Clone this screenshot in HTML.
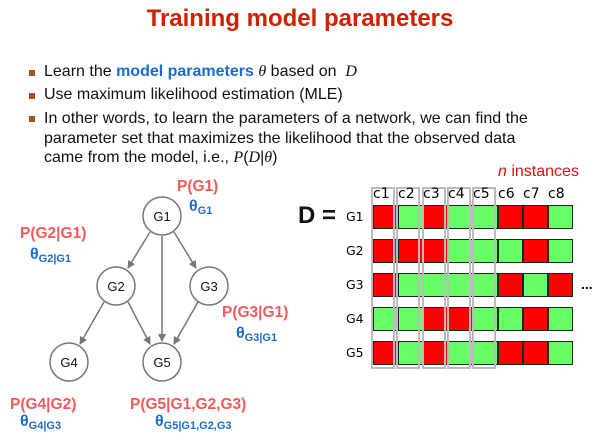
<!DOCTYPE html>
<html><head><style>
body{margin:0;width:600px;height:438px;background:#fff;position:relative;overflow:hidden;font-family:"Liberation Sans",Arial,sans-serif}
.a{position:absolute;white-space:nowrap}
.t{left:0;width:600px;text-align:center;top:5px;font-size:24px;font-weight:bold;color:#cc2200}
.b{font-size:16px;color:#111;left:44px}
.sq{position:absolute;width:6px;height:6px;background:#a0521d;left:29px}
.m{font-family:"Liberation Serif",serif;font-style:italic}
.r{color:#f05a5a;font-weight:bold;font-size:15.5px}
.bl{color:#1a6ccc;font-weight:bold;font-size:16px}
.bl sub{font-size:11px;vertical-align:-3px}
.cell{position:absolute;width:25px;height:24px;box-sizing:border-box;border:1px solid #222}
.R{background:#ff0000}.G{background:#66ff66}
.col{position:absolute;top:187px;height:182px;width:24px;border:2px solid #bbb;box-sizing:border-box}
.cl{font-size:14px;font-family:"DejaVu Sans",sans-serif;color:#000;top:186px}
.rl{font-size:12.5px;font-family:"DejaVu Sans",sans-serif;left:346px}
</style></head><body>
<div class="a t">Training model parameters</div>
<div class="sq" style="top:70px"></div><div class="a b" style="top:63px">Learn the <b style="color:#1a6ccc">model parameters</b> <span class="m">θ</span> based on &nbsp;<span class="m">D</span></div>
<div class="sq" style="top:93px"></div><div class="a b" style="top:86px">Use maximum likelihood estimation (MLE)</div>
<div class="sq" style="top:116px"></div><div class="a b" style="top:109px;line-height:19.5px">In other words, to learn the parameters of a network, we can find the<br>parameter set that maximizes the likelihood that the observed data<br>came from the model, i.e., <span class="m">P</span>(<span class="m">D</span>|<span class="m">θ</span>)</div>
<div class="a" style="left:498px;top:163px;font-size:16px;color:#dd1111"><i>n</i> instances</div>

<svg class="a" style="left:0;top:0" width="300" height="438">
<defs><marker id="ar" markerWidth="8" markerHeight="8" refX="7" refY="4" orient="auto" markerUnits="userSpaceOnUse"><path d="M0,0 L8,4 L0,8z" fill="#777"/></marker></defs>
<g stroke="#777" stroke-width="1.5" marker-end="url(#ar)">
<line x1="150" y1="232" x2="128" y2="268"/>
<line x1="174" y1="232" x2="196" y2="268"/>
<line x1="162" y1="236" x2="162" y2="341"/>
<line x1="104" y1="302" x2="80" y2="344"/>
<line x1="128" y1="302" x2="150" y2="344"/>
<line x1="198" y1="302" x2="174" y2="344"/>
</g>
<g fill="#fff" stroke="#777" stroke-width="1.5">
<circle cx="162" cy="216" r="19"/><circle cx="116" cy="286" r="19"/><circle cx="209" cy="286" r="19"/><circle cx="69" cy="362" r="19"/><circle cx="162" cy="362" r="19"/>
</g>
<g font-family="Liberation Sans,sans-serif" font-size="13" text-anchor="middle" fill="#111">
<text x="162" y="221">G1</text><text x="116" y="291">G2</text><text x="209" y="291">G3</text><text x="69" y="367">G4</text><text x="162" y="367">G5</text>
</g>
</svg>
<div class="a r" style="left:177px;top:178px">P(G1)</div>
<div class="a bl" style="left:189px;top:198px">θ<sub>G1</sub></div>
<div class="a r" style="left:20px;top:225px">P(G2|G1)</div>
<div class="a bl" style="left:30px;top:246px">θ<sub>G2|G1</sub></div>
<div class="a r" style="left:222px;top:304px">P(G3|G1)</div>
<div class="a bl" style="left:236px;top:325px">θ<sub>G3|G1</sub></div>
<div class="a r" style="left:10px;top:396px">P(G4|G2)</div>
<div class="a bl" style="left:20px;top:413px">θ<sub>G4|G3</sub></div>
<div class="a r" style="left:130px;top:396px">P(G5|G1,G2,G3)</div>
<div class="a bl" style="left:155px;top:413px">θ<sub>G5|G1,G2,G3</sub></div>

<div class="a" style="left:298px;top:202px;font-size:24px;font-weight:bold;color:#111">D =</div>
<div class="a rl" style="top:209px">G1</div>
<div class="a rl" style="top:243px">G2</div>
<div class="a rl" style="top:277px">G3</div>
<div class="a rl" style="top:311px">G4</div>
<div class="a rl" style="top:345px">G5</div>
<div class="a" style="left:581px;top:276px;font-size:14px;font-weight:bold">...</div>

<div id="g"></div>
<script>
var rows=["RGRGGRRG","RRRGGGRG","RGGGGRGR","GGRRGGRG","RGRGGRRG"],h="";
rows.forEach(function(r,i){for(var j=0;j<8;j++){h+='<div class="cell '+r[j]+'" style="left:'+(373+j*25)+'px;top:'+(205+i*34)+'px"></div>';}});
for(var j=0;j<5;j++)h+='<div class="col" style="left:'+(371+j*25.3)+'px"></div>';
for(var j=0;j<8;j++)h+='<div class="a cl" style="left:'+(373+j*25)+'px">c'+(j+1)+'</div>';
document.getElementById("g").innerHTML=h;
</script>
</body></html>
